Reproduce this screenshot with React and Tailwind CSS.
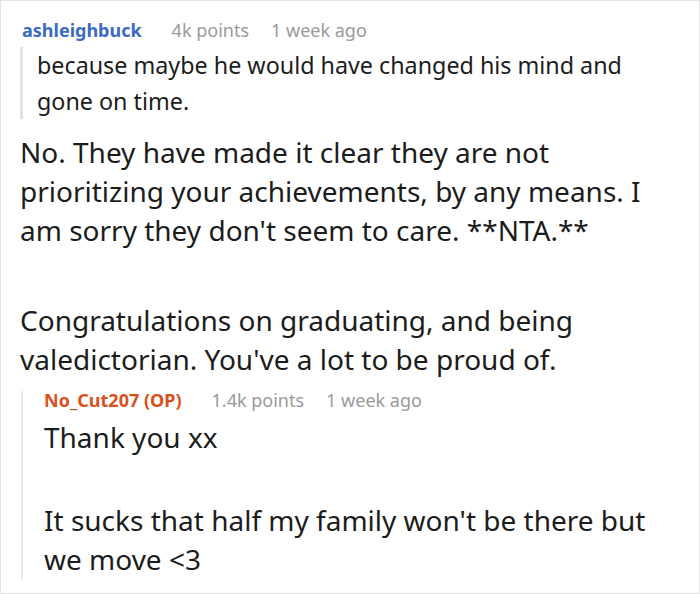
import React from 'react'

const Meta = ({ name, nameClass, points, lead }) => (
  <div className={`flex items-baseline text-[18px] ${lead}`}>
    <span className={`font-bold ${nameClass}`}>{name}</span>
    <span className="ml-[30px] text-[#9a9a9a]">{points}</span>
    <span className="ml-[22px] text-[#9a9a9a]">1 week ago</span>
  </div>
)

const App = () => {
  return (
    <div
      className="w-[700px] h-[594px] overflow-hidden border border-[#e3e3e3] bg-white text-[#1c1c1c]"
      style={{ fontFamily: '"Noto Sans", "Open Sans", sans-serif' }}
    >
      <div className="pl-[21px] pt-[17px]">
        <Meta name="ashleighbuck" nameClass="text-[#3b6bbf]" points="4k points" lead="leading-[24px]" />
      </div>

      {/* quoted parent */}
      <div className="ml-[19px] mt-[5px] border-l-[3px] border-[#e2e2e2] pl-[14px] pr-[68px] text-[23.3px] leading-[36px]">
        <p>because maybe he would have changed his mind and gone on time.</p>
      </div>

      <div className="pl-[19px] pr-[40px] pt-[14px] text-[28px] leading-[39px]">
        <p>
          No. They have made it clear they are not prioritizing your achievements, by any means. I
          am sorry they don't seem to care. **NTA.**
        </p>
        <p className="mt-[51px]">
          Congratulations on graduating, and being valedictorian. You've a lot to be proud of.
        </p>
      </div>

      {/* OP reply */}
      <div className="ml-[20px] mt-[12px] border-l-[2px] border-[#ebebeb] pl-[21px] pr-[30px]">
        <Meta name="No_Cut207 (OP)" nameClass="text-[#d9501c]" points="1.4k points" lead="leading-[18px]" />
        <div className="pt-[9px] text-[28px] leading-[39px]">
          <p>Thank you xx</p>
          <p className="mt-[44px]">It sucks that half my family won't be there but we move &lt;3</p>
        </div>
      </div>
    </div>
  )
}

export default App
